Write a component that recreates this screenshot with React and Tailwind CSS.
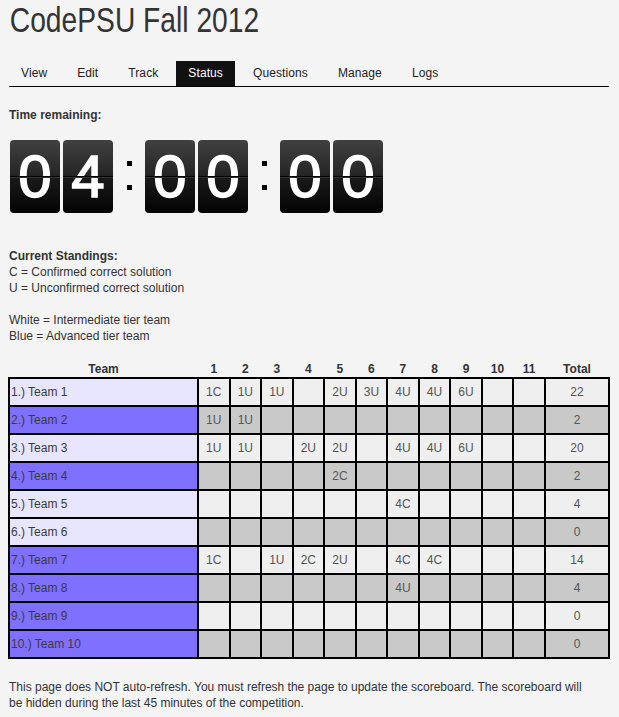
import React from 'react';

const tabs = ['View', 'Edit', 'Track', 'Status', 'Questions', 'Manage', 'Logs'];

// blue = advanced tier team, scores per problem 1..11
const teams = [
  { name: '1.) Team 1', blue: false, s: ['1C', '1U', '1U', '', '2U', '3U', '4U', '4U', '6U', '', ''], total: 22 },
  { name: '2.) Team 2', blue: true, s: ['1U', '1U', '', '', '', '', '', '', '', '', ''], total: 2 },
  { name: '3.) Team 3', blue: false, s: ['1U', '1U', '', '2U', '2U', '', '4U', '4U', '6U', '', ''], total: 20 },
  { name: '4.) Team 4', blue: true, s: ['', '', '', '', '2C', '', '', '', '', '', ''], total: 2 },
  { name: '5.) Team 5', blue: false, s: ['', '', '', '', '', '', '4C', '', '', '', ''], total: 4 },
  { name: '6.) Team 6', blue: false, s: ['', '', '', '', '', '', '', '', '', '', ''], total: 0 },
  { name: '7.) Team 7', blue: true, s: ['1C', '', '1U', '2C', '2U', '', '4C', '4C', '', '', ''], total: 14 },
  { name: '8.) Team 8', blue: true, s: ['', '', '', '', '', '', '4U', '', '', '', ''], total: 4 },
  { name: '9.) Team 9', blue: true, s: ['', '', '', '', '', '', '', '', '', '', ''], total: 0 },
  { name: '10.) Team 10', blue: true, s: ['', '', '', '', '', '', '', '', '', '', ''], total: 0 },
];

const Digit = ({ d }) => (
  <div className="relative w-[50px] h-[73px] rounded-[4px] overflow-hidden bg-[linear-gradient(to_bottom,#404040_0%,#262626_48%,#1c1c1c_50%,#1a1a1a_52%,#030303_100%)] text-white text-center text-[60px] leading-[73px] [-webkit-text-stroke:1.5px_white]">
    {d}
    <div className="absolute left-0 right-0 top-[36px] h-[2px] bg-[#050505] border-b border-[#333]" />
  </div>
);

const Colon = () => (
  <div className="w-[32px] h-[73px] flex flex-col items-center pt-[21px] gap-[19px]">
    <div className="w-[5px] h-[5px] bg-black" />
    <div className="w-[5px] h-[5px] bg-black" />
  </div>
);

const App = () => {
  return (
    <div className="min-h-screen bg-[#f4f4f4] text-[#333] font-['Liberation_Sans',Arial,sans-serif] text-[12px] leading-[16px] px-[9px]">
      <h1 className="h-[40px] leading-[40px] text-[35px] text-[#333] font-normal pl-[1px] origin-left scale-x-[0.806] whitespace-nowrap">
        CodePSU Fall 2012
      </h1>

      <div className="mt-[21px] w-[600px] flex gap-[6px] border-b border-black tracking-[0.1px]">
        {tabs.map((t) => (
          <div
            key={t}
            className={
              t === 'Status'
                ? 'h-[25px] leading-[25px] px-[12px] bg-[#111] text-white'
                : 'h-[25px] leading-[25px] px-[12px] text-[#222]'
            }
          >
            {t}
          </div>
        ))}
      </div>

      <p className="mt-[20px] font-bold">Time remaining:</p>

      <div className="mt-[17px] flex items-start pl-[1px]">
        <div className="flex gap-[3px]"><Digit d="0" /><Digit d="4" /></div>
        <Colon />
        <div className="flex gap-[3px]"><Digit d="0" /><Digit d="0" /></div>
        <Colon />
        <div className="flex gap-[3px]"><Digit d="0" /><Digit d="0" /></div>
      </div>

      <div className="mt-[35px]">
        <p className="font-bold">Current Standings:</p>
        <p>C = Confirmed correct solution</p>
        <p>U = Unconfirmed correct solution</p>
        <p>&nbsp;</p>
        <p>White = Intermediate tier team</p>
        <p>Blue = Advanced tier team</p>
      </div>

      <table className="mt-[16px] -ml-[1px] w-[602px] table-fixed border-collapse text-[12px]">
        <colgroup>
          <col className="w-[189px]" />
          {Array.from({ length: 11 }).map((_, i) => (
            <col key={i} />
          ))}
          <col className="w-[64px]" />
        </colgroup>
        <thead>
          <tr className="h-[18px]">
            <th className="font-bold text-[#333]">Team</th>
            {Array.from({ length: 11 }).map((_, i) => (
              <th key={i} className="font-bold text-[#333]">{i + 1}</th>
            ))}
            <th className="font-bold text-[#333]">Total</th>
          </tr>
        </thead>
        <tbody>
          {teams.map((t, r) => {
            const cellBg = r % 2 === 0 ? 'bg-[#efefef]' : 'bg-[#c9c9c9]';
            return (
              <tr key={t.name} className="h-[28px]">
                <td className={`border-2 border-black px-[1px] text-left text-[#3a3a3a] ${t.blue ? 'bg-[#8070ff]' : 'bg-[#e8e6ff]'}`}>
                  {t.name}
                </td>
                {t.s.map((v, i) => (
                  <td key={i} className={`border-2 border-black text-center text-[#555] ${cellBg}`}>
                    {v}
                  </td>
                ))}
                <td className={`border-2 border-black text-center text-[#555] ${cellBg}`}>{t.total}</td>
              </tr>
            );
          })}
        </tbody>
      </table>

      <p className="mt-[20px] w-[585px] pb-[16px]">
        This page does NOT auto-refresh. You must refresh the page to update the scoreboard. The scoreboard will be hidden during the last 45 minutes of the competition.
      </p>
    </div>
  );
};

export default App;
